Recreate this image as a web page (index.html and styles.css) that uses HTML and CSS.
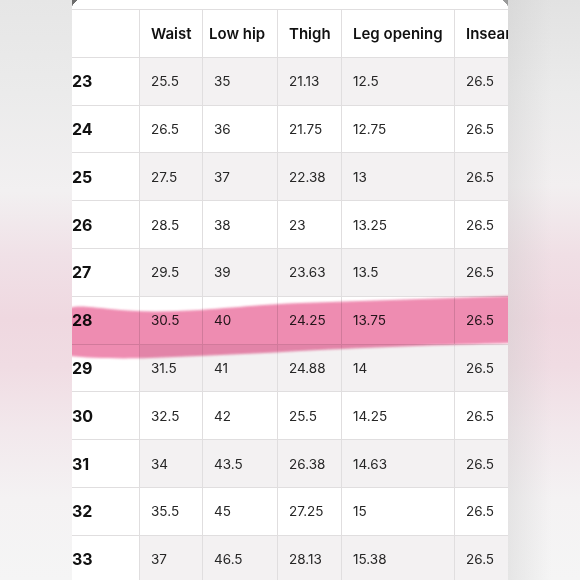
FILE: index.html
```html
<!DOCTYPE html>
<html lang="en">
<head>
<meta charset="utf-8">
<title>Size chart</title>
<link rel="stylesheet" href="styles.css">
</head>
<body>
<div class="page">
  <div class="side side-left"></div>
  <div class="panel">
    <div class="row head">
      <div class="c size"></div>
      <div class="c">Waist</div>
      <div class="c tight">Low hip</div>
      <div class="c">Thigh</div>
      <div class="c">Leg opening</div>
      <div class="c">Inseam</div>
    </div>
    <div class="row shade"><div class="c size">23</div><div class="c">25.5</div><div class="c">35</div><div class="c">21.13</div><div class="c">12.5</div><div class="c">26.5</div></div>
    <div class="row"><div class="c size">24</div><div class="c">26.5</div><div class="c">36</div><div class="c">21.75</div><div class="c">12.75</div><div class="c">26.5</div></div>
    <div class="row shade"><div class="c size">25</div><div class="c">27.5</div><div class="c">37</div><div class="c">22.38</div><div class="c">13</div><div class="c">26.5</div></div>
    <div class="row"><div class="c size">26</div><div class="c">28.5</div><div class="c">38</div><div class="c">23</div><div class="c">13.25</div><div class="c">26.5</div></div>
    <div class="row shade"><div class="c size">27</div><div class="c">29.5</div><div class="c">39</div><div class="c">23.63</div><div class="c">13.5</div><div class="c">26.5</div></div>
    <div class="row"><div class="c size">28</div><div class="c">30.5</div><div class="c">40</div><div class="c">24.25</div><div class="c">13.75</div><div class="c">26.5</div></div>
    <div class="row shade"><div class="c size">29</div><div class="c">31.5</div><div class="c">41</div><div class="c">24.88</div><div class="c">14</div><div class="c">26.5</div></div>
    <div class="row"><div class="c size">30</div><div class="c">32.5</div><div class="c">42</div><div class="c">25.5</div><div class="c">14.25</div><div class="c">26.5</div></div>
    <div class="row shade"><div class="c size">31</div><div class="c">34</div><div class="c">43.5</div><div class="c">26.38</div><div class="c">14.63</div><div class="c">26.5</div></div>
    <div class="row"><div class="c size">32</div><div class="c">35.5</div><div class="c">45</div><div class="c">27.25</div><div class="c">15</div><div class="c">26.5</div></div>
    <div class="row shade"><div class="c size">33</div><div class="c">37</div><div class="c">46.5</div><div class="c">28.13</div><div class="c">15.38</div><div class="c">26.5</div></div>

    <svg class="marker" width="436" height="580" viewBox="72 0 436 580" aria-hidden="true">
      <defs>
        <filter id="soft" x="-5%" y="-20%" width="110%" height="140%">
          <feGaussianBlur stdDeviation="1.2"/>
        </filter>
      </defs>
      <path filter="url(#soft)" fill="#ee86ad" d="M 70 308 C 78 305, 90 307, 110 309 C 135 312, 165 312, 200 310 C 240 307, 270 304, 300 303 C 370 301, 440 298, 512 296 L 512 343 C 440 345, 380 347, 300 351 C 250 354, 200 356, 150 358 C 115 359, 90 358, 70 356 Z"/>
    </svg>
  </div>
  <div class="side side-right"></div>
</div>
</body>
</html>
```

FILE: styles.css
```css
html, body {
  margin: 0;
  padding: 0;
}

body {
  width: 580px;
  height: 580px;
  overflow: hidden;
  font-family: Inter, "Noto Sans", "Liberation Sans", sans-serif;
}

.page {
  display: flex;
  width: 580px;
  height: 580px;
  overflow: hidden;
}

.side {
  width: 72px;
  flex: 0 0 72px;
  height: 580px;
}

.side-left {
  background: linear-gradient(to bottom,
    #e6e6e6 0%,
    #ebebeb 16%,
    #f2f0f1 33%,
    #f0e1e7 44%,
    #efd8e0 55%,
    #f0dce3 63%,
    #f2e8ec 74%,
    #f4f2f3 86%,
    #f5f5f5 100%);
}

.side-right {
  background:
    linear-gradient(to right, rgba(200,200,200,0.35), rgba(255,255,255,0) 60%),
    linear-gradient(to bottom,
      #e2e2e2 0%,
      #ebebeb 16%,
      #f2eff0 32%,
      #f0dfe5 44%,
      #efd8e0 55%,
      #f0dce3 63%,
      #f2e8ec 74%,
      #f4f2f3 86%,
      #f5f5f5 100%);
}

.panel {
  position: relative;
  width: 436px;
  flex: 0 0 436px;
  height: 580px;
  overflow: hidden;
  background: #ffffff;
  padding-top: 9px;
  box-sizing: border-box;
}

.panel::before {
  content: "";
  position: absolute;
  left: 0;
  top: 0;
  width: 5px;
  height: 6px;
  background: linear-gradient(to bottom right, #6e6e6e 50%, rgba(0,0,0,0) 52%);
}

.panel::after {
  content: "";
  position: absolute;
  right: 0;
  top: 0;
  width: 5px;
  height: 6px;
  background: linear-gradient(to bottom left, #9a9a9a 50%, rgba(0,0,0,0) 52%);
}

.row {
  display: grid;
  grid-template-columns: 68px 63px 75px 64px 113px 90px;
  height: 47.8px;
  box-sizing: border-box;
  border-top: 1px solid #e0dedf;
}

.c {
  box-sizing: border-box;
  display: flex;
  align-items: center;
  padding-left: 11px;
  border-right: 1px solid #e0dedf;
  font-size: 13.5px;
  color: #262626;
  white-space: nowrap;
  overflow: hidden;
}

.shade .c {
  background: #f3f1f2;
}

.c.size,
.shade .c.size {
  background: #ffffff;
  padding-left: 0;
  font-size: 16px;
  font-weight: 700;
  color: #111111;
}

.head .c {
  font-size: 15px;
  font-weight: 600;
  color: #111111;
}

.head .c.tight {
  padding-left: 6px;
}

.marker {
  position: absolute;
  left: 0;
  top: 0;
  pointer-events: none;
  mix-blend-mode: multiply;
  opacity: 0.95;
}
```
